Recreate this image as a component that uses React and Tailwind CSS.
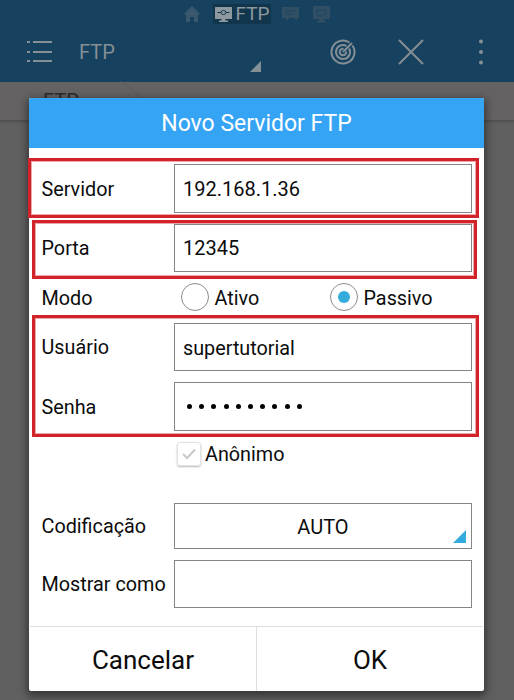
import React from "react";

function StatusTabs() {
  return (
    <div className="flex h-7 items-center pl-[183px] text-[#3a586d]">
      <svg className="h-[18px] w-[18px]" viewBox="0 0 18 18" fill="currentColor">
        <path d="M9 1 0.5 9.5H3V17h4v-5h4v5h4V9.500h2.500z" />
      </svg>
      <div className="ml-[12px] flex h-[20px] w-[58px] items-center bg-[#12354e] pl-[2px] text-[#8d989f]">
        <svg className="h-[16px] w-[17px]" viewBox="0 0 17 16">
          <path d="M0 1h17v12h-6.500v1.500H13V16H4v-1.500h2.500V13H0z" fill="currentColor" />
          <path d="M2.500 6.500h3.500M11 6.500h3.500" stroke="#12354e" />
          <ellipse cx="8.500" cy="6.500" rx="2.500" ry="2" fill="none" stroke="#12354e" />
        </svg>
        <span className="ml-[3.500px] text-[19px] leading-[20px]">FTP</span>
      </div>
      <svg className="ml-[11px] h-[16px] w-[17px] text-[#304f65]" viewBox="0 0 17 16">
        <path d="M0 1h17v11h-2v3l-3-3H7l-3 3v-3H0z" fill="currentColor" />
        <path d="M3 5h11M3 8h8" stroke="#1c4661" />
      </svg>
      <svg className="ml-[14px] h-[17px] w-[17px] text-[#304f65]" viewBox="0 0 17 17">
        <path d="M0 0h17v13h-6v2h2v1.500H4V15h2v-2H0z" fill="currentColor" />
        <path d="M4 4h9v5H9l-2 2V9H4z" fill="none" stroke="#1f4862" />
      </svg>
    </div>
  );
}

function Toolbar() {
  return (
    <div className="flex h-[54px] items-center pb-[7px] text-[#858f96]">
      <svg className="ml-[27px] h-[22px] w-[26px]" viewBox="0 0 26 22" stroke="currentColor" strokeWidth="2">
        <path d="M0 1h3M6 1h19M0 11h3M6 11h19M0 20h3M6 20h19" />
      </svg>
      <span className="ml-[26px] w-[171px] text-[20px] leading-6">FTP</span>
      <svg className="-mb-[29px] h-[11px] w-[11px]" viewBox="0 0 11 11" fill="currentColor">
        <path d="M11 0v11H0z" />
      </svg>
      <svg className="ml-[69px] h-[26px] w-[26px]" viewBox="0 0 26 26" fill="none" stroke="currentColor" strokeWidth="2">
        <path d="M19.500 3.500A11.500 11.500 0 1 0 22.500 6.500" />
        <path d="M16.500 6.900A7 7 0 1 0 19.100 9.500" />
        <path d="M13.500 9.900A3.200 3.200 0 1 0 16.100 12.500" />
        <path d="M13 13 22 4" />
      </svg>
      <svg className="ml-[42px] h-[26px] w-[26px]" viewBox="0 0 26 26" stroke="currentColor" strokeWidth="2">
        <path d="M1 1 25 25M25 1 1 25" />
      </svg>
      <svg className="ml-[54px] h-[26px] w-[6px]" viewBox="0 0 6 26" fill="currentColor">
        <circle cx="3" cy="2.500" r="2" />
        <circle cx="3" cy="13" r="2" />
        <circle cx="3" cy="23.500" r="2" />
      </svg>
    </div>
  );
}

function Row({ label, children, className = "" }) {
  return (
    <div className={"flex items-center " + className}>
      <span className="w-[132.500px] shrink-0 whitespace-nowrap pt-[2px] text-[19.800px]">{label}</span>
      {children}
    </div>
  );
}

function Field({ children, className = "h-[49px]" }) {
  return (
    <div className={"flex w-[298px] items-center border border-[#858585] px-2 " + className}>{children}</div>
  );
}

function Radio({ label, checked }) {
  return (
    <div className="flex items-center">
      <span className="-mt-[2px] flex h-[28px] w-[28px] items-center justify-center rounded-full border border-[#8c8c8c]">
        {checked && <span className="h-[12px] w-[12px] rounded-full bg-[#33acdd]" />}
      </span>
      <span className="ml-[5.500px] pt-[2px] text-[19.800px]">{label}</span>
    </div>
  );
}

function Highlight({ className }) {
  return (
    <div className={"pointer-events-none absolute border-[3px] border-[#d2232a] shadow-[inset_0_0_0_1px_rgba(210,35,42,0.4)] " + className} />
  );
}

export default function App() {
  return (
    <div className="relative h-[700px] w-[514px] overflow-hidden bg-[#606060] font-[Roboto,sans-serif]">
      <header className="h-[82px] bg-[#16425f]">
        <StatusTabs />
        <Toolbar />
      </header>
      <div className="flex h-[39px] border-b border-[#515151] bg-[#646262] pl-[43px] pt-[7px] text-[20px] leading-6 text-[#2b2b2b] shadow-[0_1px_2px_#505050]">
        FTP
        <svg className="-mt-[8px] ml-[42px] h-[38px] w-[38px]" viewBox="0 0 38 38" fill="none" stroke="#5a5959">
          <path d="M0 0 38 30" />
        </svg>
      </div>

      <div className="absolute left-[29px] top-[98px] flex h-[593px] w-[455px] flex-col rounded-[2px] bg-white text-[20px] leading-6 text-[#0c0c0c] shadow-[0_3px_9px_2px_rgba(0,0,0,0.45)]">
        <h1 className="h-[50px] rounded-t-[2px] bg-[#36a4f4] pt-px text-center text-[23px] leading-[50px] text-white">Novo Servidor FTP</h1>

        <div className="flex flex-1 flex-col pl-[12.500px] pt-[16px]">
          <Row label="Servidor"><Field className="h-[49px] pt-px">192.168.1.36</Field></Row>
          <Row label="Porta" className="mt-[11px]"><Field className="h-[48px]">12345</Field></Row>
          <Row label="Modo" className="h-[51px]">
            <div className="ml-[7px] w-[149px]"><Radio label="Ativo" /></div>
            <Radio label="Passivo" checked />
          </Row>
          <Row label="Usuário"><Field className="h-[48px] pt-[3px] text-[19.800px]">supertutorial</Field></Row>
          <Row label="Senha" className="mt-[11px]">
            <Field>
              <span className="flex gap-[7.200px] pl-[4px]">
                {Array.from({ length: 10 }, (_, i) => (
                  <span key={i} className="h-[5px] w-[5px] rounded-full bg-black" />
                ))}
              </span>
            </Field>
          </Row>
          <div className="ml-[135.500px] mt-[10px] flex h-[26px] items-center">
            <span className="flex h-[24px] w-[24px] items-center justify-center rounded-[3px] border border-[#e2e2e2] shadow-[0_1px_2px_#bbb]">
              <svg className="h-[12px] w-[14px]" viewBox="0 0 14 12" fill="none" stroke="#c9c9c9" strokeWidth="2">
                <path d="M1 6 5 10 13 1.500" />
              </svg>
            </span>
            <span className="ml-[4px] pt-px text-[19.800px]">Anônimo</span>
          </div>
          <Row label="Codificação" className="mt-[36px]">
            <Field className="relative h-[46px] justify-center pt-[2px]">
              AUTO
              <svg className="absolute bottom-[5px] right-[5px] h-[13px] w-[13px]" viewBox="0 0 13 13" fill="#33acdd">
                <path d="M13 0v13H0z" />
              </svg>
            </Field>
          </Row>
          <Row label="Mostrar como" className="mt-[11px]"><Field className="h-[48px]" /></Row>
        </div>

        <div className="mx-[1px] flex h-[65px] border-t border-[#dedede] text-[26px]">
          <button className="w-[227px] border-r border-[#dedede] pt-px">Cancelar</button>
          <button className="flex-1 pt-px">OK</button>
        </div>

        <Highlight className="-left-px top-[60px] h-[60px] w-[451px]" />
        <Highlight className="left-[3px] top-[122px] h-[59px] w-[445px]" />
        <Highlight className="left-[3px] top-[217px] h-[122px] w-[447px]" />
      </div>
    </div>
  );
}
